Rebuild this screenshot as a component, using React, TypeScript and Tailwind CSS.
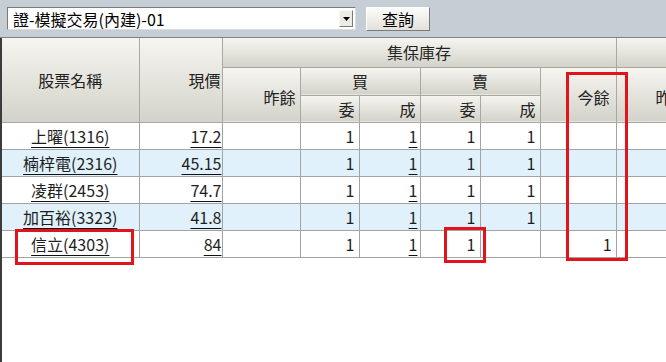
import React from 'react';

const FONT = { fontFamily: '"Noto Sans CJK TC", "Noto Sans", sans-serif' };

interface Row {
  name: string;
  price: string;
  prev: string;
  buyOrder: string;
  buyDone: string;
  sellOrder: string;
  sellDone: string;
  today: string;
}

const rows: Row[] = [
  { name: '上曜(1316)', price: '17.2', prev: '', buyOrder: '1', buyDone: '1', sellOrder: '1', sellDone: '1', today: '' },
  { name: '楠梓電(2316)', price: '45.15', prev: '', buyOrder: '1', buyDone: '1', sellOrder: '1', sellDone: '1', today: '' },
  { name: '凌群(2453)', price: '74.7', prev: '', buyOrder: '1', buyDone: '1', sellOrder: '1', sellDone: '1', today: '' },
  { name: '加百裕(3323)', price: '41.8', prev: '', buyOrder: '1', buyDone: '1', sellOrder: '1', sellDone: '1', today: '' },
  { name: '信立(4303)', price: '84', prev: '', buyOrder: '1', buyDone: '1', sellOrder: '1', sellDone: '', today: '1' },
];

const head = 'bg-linear-to-b from-[#f6f5f0] to-[#d3d2ca] border border-[#a9a9a2] text-[#222] font-normal';
const cell = 'border border-[#a3a3a3] h-[27px] text-[16px] leading-none text-[#1e1e1e]';
const num = `${cell} text-right pr-[4px]`;
const link = 'underline underline-offset-[4px] decoration-[#111]';

export default function App() {
  return (
    <div className="relative w-[666px] h-[362px] overflow-hidden bg-white" style={FONT}>
      {/* toolbar */}
      <div className="h-[38px] bg-[#c5cdd5] border-b border-[#7d8388] flex items-center pl-[7px] gap-[10px]">
        <div className="w-[349px] h-[23px] bg-white border border-[#7a7a7a] border-r-[#dcdcdc] border-b-[#dcdcdc] flex items-center">
          <span className="flex-1 pl-[5px] text-[16px] leading-none text-black">證-模擬交易(內建)-01</span>
          <div className="w-[14px] h-[17px] mr-[2px] bg-[#ecebe6] border border-[#f8f8f8] border-r-[#7a7a7a] border-b-[#7a7a7a] flex items-center justify-center">
            <svg width="7" height="4" viewBox="0 0 7 4"><path d="M0 0h7L3.5 4z" fill="#000" /></svg>
          </div>
        </div>
        <button className="w-[64px] h-[24px] bg-linear-to-b from-[#fbfbf9] to-[#e2e1da] border border-[#fff] border-r-[#7a7a7a] border-b-[#7a7a7a] text-[16px] leading-none text-black">
          查詢
        </button>
      </div>

      {/* grid */}
      <div className="border-l-2 border-[#3c3c3c] h-[324px]">
        <table className="table-fixed border-collapse w-[692px]">
          <colgroup>
            <col className="w-[137px]" />
            <col className="w-[83px]" />
            <col className="w-[78px]" />
            <col className="w-[59px]" />
            <col className="w-[61px]" />
            <col className="w-[60px]" />
            <col className="w-[60px]" />
            <col className="w-[76px]" />
            <col className="w-[78px]" />
          </colgroup>
          <thead className="text-[16px]">
            <tr className="h-[29px]">
              <th rowSpan={3} className={`${head} border-t-0 border-l-0 text-center`}>股票名稱</th>
              <th rowSpan={3} className={`${head} border-t-0 text-right pr-[1px]`}>現價</th>
              <th colSpan={6} className={`${head} border-t-0 text-center`}>集保庫存</th>
              <th className={`${head} border-t-0`}></th>
            </tr>
            <tr className="h-[28px]">
              <th rowSpan={2} className={`${head} text-right pr-[4px] pt-[4px]`}>昨餘</th>
              <th colSpan={2} className={`${head} text-center`}>買</th>
              <th colSpan={2} className={`${head} text-center`}>賣</th>
              <th rowSpan={2} className={`${head} text-right pr-[6px] pt-[4px]`}>今餘</th>
              <th rowSpan={2} className={`${head} text-right pr-[6px] pt-[4px]`}>昨餘</th>
            </tr>
            <tr className="h-[27px]">
              <th className={`${head} text-right pr-[4px]`}>委</th>
              <th className={`${head} text-right pr-[4px]`}>成</th>
              <th className={`${head} text-right pr-[4px]`}>委</th>
              <th className={`${head} text-right pr-[4px]`}>成</th>
            </tr>
          </thead>
          <tbody>
            {rows.map((r, i) => (
              <tr key={r.name} className={i % 2 === 1 ? 'bg-[#e0f1fb]' : 'bg-white'}>
                <td className={`${cell} border-l-0 text-center whitespace-nowrap`}>
                  <span className={link}>{r.name}</span>
                </td>
                <td className={`${cell} text-right`}>
                  <span className={link}>{r.price}</span>
                </td>
                <td className={num}>{r.prev}</td>
                <td className={num}>{r.buyOrder}</td>
                <td className={`${cell} text-right pr-[2px]`}>
                  <span className={link}>{r.buyDone}</span>
                </td>
                <td className={num}>{r.sellOrder}</td>
                <td className={num}>{r.sellDone}</td>
                <td className={num}>{r.today}</td>
                <td className={num}></td>
              </tr>
            ))}
          </tbody>
        </table>
      </div>

      {/* red annotation boxes */}
      <div className="absolute left-[15px] top-[229px] w-[119px] h-[36px] border-[3px] border-[#e0141a]" />
      <div className="absolute left-[444px] top-[227px] w-[42px] h-[36px] border-[3px] border-[#e0141a]" />
      <div className="absolute left-[566px] top-[72px] w-[62px] h-[189px] border-[3px] border-[#e0141a]" />
    </div>
  );
}
